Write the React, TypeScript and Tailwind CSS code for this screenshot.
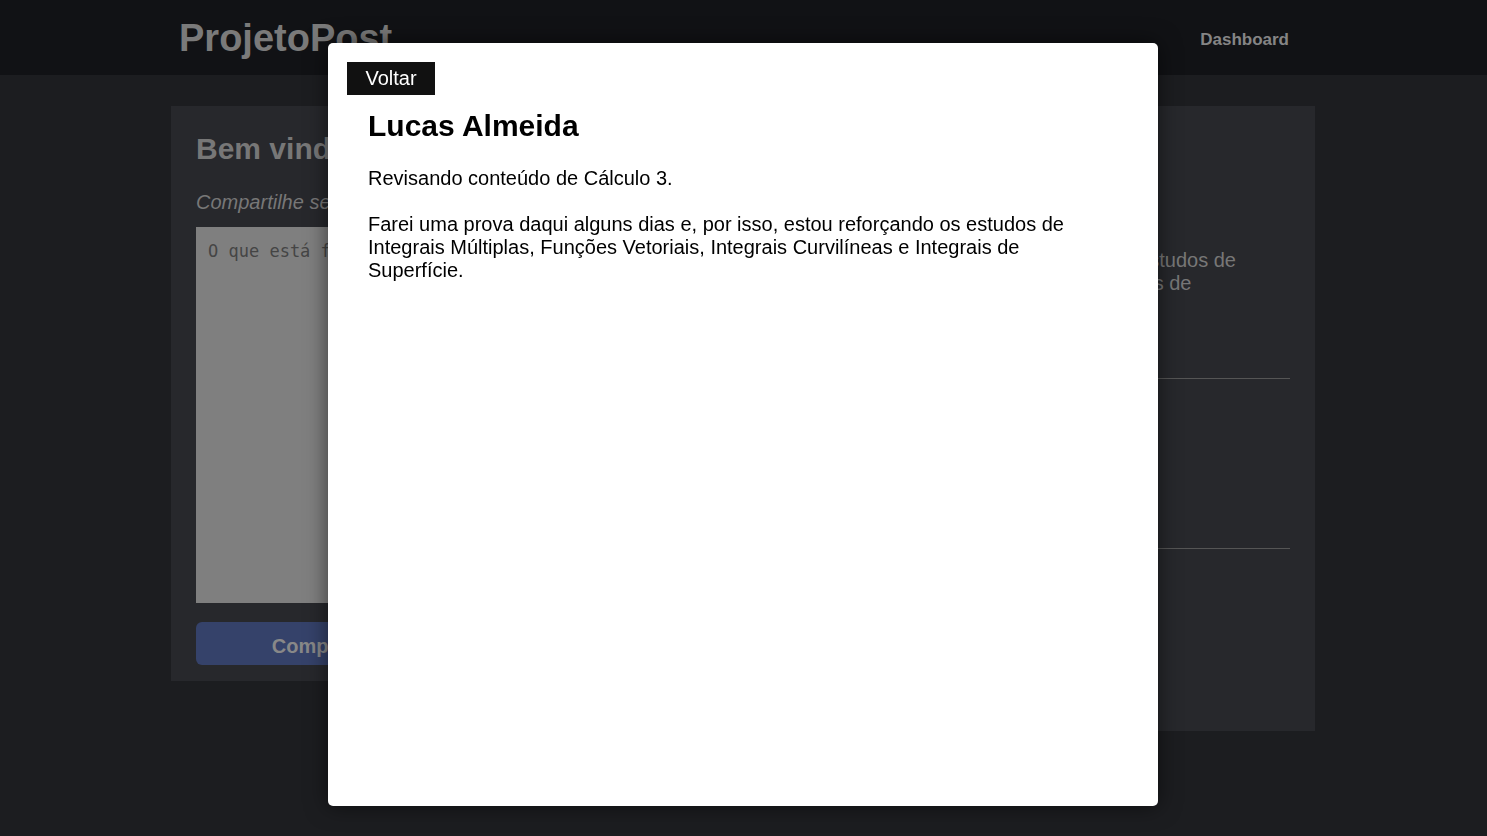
const posts = [
  {
    author: "Lucas Almeida",
    title: "Revisando conteúdo de Cálculo 3.",
    body: "Farei uma prova daqui alguns dias e, por isso, estou reforçando os estudos de Integrais Múltiplas, Funções Vetoriais, Integrais Curvilíneas e Integrais de Superfície.",
    height: "h-[248px]",
  },
  {
    author: "Marina Souza",
    title: "Primeiro post!",
    body: "Olá a todos, estou testando o ProjetoPost.",
    height: "h-[170px]",
  },
  {
    author: "Pedro Lima",
    title: "Bom dia",
    body: "Boa semana para todos.",
    height: "flex-1",
  },
];

export default function App() {
  return (
    <div className="h-screen overflow-hidden bg-[#1c1d20] font-['Liberation_Sans',Arial,sans-serif]">
      {/* page behind the modal (already dimmed) */}
      <header className="h-[75px] bg-[#111215] flex items-center justify-between pl-[179px] pr-[198px]">
        <h1 className="text-[38px] font-bold text-[#7a7a7a] leading-none">ProjetoPost</h1>
        <span className="mt-[4px] text-[17px] font-bold text-[#858585]">Dashboard</span>
      </header>

      <main className="flex items-start gap-[18px] pl-[171px] pt-[31px] w-[1315px]">
        <section className="w-[326px] bg-[#27282c] px-[25px] pt-[26px] pb-[16px]">
          <h2 className="text-[30px] font-bold text-[#777] leading-[34px] whitespace-nowrap">Bem vindo, Lucas!</h2>
          <p className="mt-[25px] text-[20px] italic text-[#777] leading-[23px] whitespace-nowrap">Compartilhe seus pensamentos</p>
          <div className="mt-[13px] h-[376px] bg-[#7f7f7f] px-[12px] pt-[12px] font-['DejaVu_Sans_Mono',monospace] text-[17px] text-[#454545]">
            O que está fazendo?
          </div>
          <button className="mt-[19px] w-full h-[43px] pt-[4px] rounded-md bg-[#35426a] text-[20px] font-bold text-[#888]">
            Compartilhar
          </button>
        </section>

        <section className="flex-1 h-[625px] bg-[#27282c] px-[25px] pt-[25px] pb-[25px] flex flex-col">
          {posts.map((p, i) => (
            <div key={i} className={`${p.height} ${i < 2 ? "border-b border-[#555]" : ""} text-[#777]`}>
              <h3 className="text-[24px] font-bold leading-[28px]">{p.author}</h3>
              <p className="mt-[24px] text-[20px] leading-[23px]">{p.title}</p>
              <p className="mt-[43px] text-[20px] leading-[23px] w-[750px]">{p.body}</p>
            </div>
          ))}
        </section>
      </main>

      {/* modal */}
      <div className="fixed left-[328px] top-[43px] w-[830px] h-[763px] bg-white rounded-[5px] shadow-[0_0_22px_rgba(0,0,0,0.55)] p-[19px]">
        <button className="w-[88px] h-[33px] bg-[#111] text-white text-[20px] leading-[33px]">Voltar</button>
        <div className="pl-[21px] w-[766px] text-black">
          <h2 className="mt-[14px] text-[30px] font-bold leading-[34px]">Lucas Almeida</h2>
          <p className="mt-[24px] text-[20px] leading-[23px]">Revisando conteúdo de Cálculo 3.</p>
          <p className="mt-[23px] text-[20px] leading-[23px]">
            Farei uma prova daqui alguns dias e, por isso, estou reforçando os estudos de Integrais Múltiplas, Funções Vetoriais, Integrais Curvilíneas e Integrais de Superfície.
          </p>
        </div>
      </div>
    </div>
  );
}
